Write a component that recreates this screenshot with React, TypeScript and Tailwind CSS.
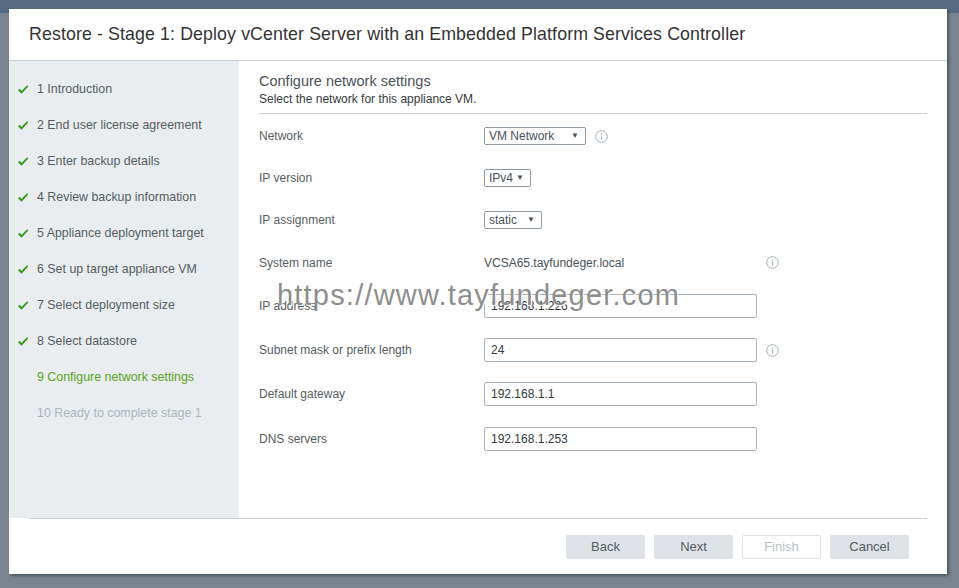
const steps = [
  { n: 1, label: 'Introduction', state: 'done' },
  { n: 2, label: 'End user license agreement', state: 'done' },
  { n: 3, label: 'Enter backup details', state: 'done' },
  { n: 4, label: 'Review backup information', state: 'done' },
  { n: 5, label: 'Appliance deployment target', state: 'done' },
  { n: 6, label: 'Set up target appliance VM', state: 'done' },
  { n: 7, label: 'Select deployment size', state: 'done' },
  { n: 8, label: 'Select datastore', state: 'done' },
  { n: 9, label: 'Configure network settings', state: 'active' },
  { n: 10, label: 'Ready to complete stage 1', state: 'todo' },
]

export default function App() {
  return (
    <div className="w-[959px] h-[588px] overflow-hidden bg-[linear-gradient(to_bottom,#566a82_13px,#7a8591_13px)] pt-[9px] pl-[9px] font-['Liberation_Sans',Arial,sans-serif]">
      <div className="w-[938px] h-[565px] bg-white flex flex-col shadow-[2px_2px_3px_rgba(40,50,60,0.55)]">
        {/* Header */}
        <div className="h-[52px] shrink-0 border-b border-[#c9d0d6] flex items-center pl-[20px] pb-[1px]">
          <h1 className="text-[17.8px] text-[#333] tracking-[0.1px]">
            Restore - Stage 1: Deploy vCenter Server with an Embedded Platform Services Controller
          </h1>
        </div>

        {/* Body */}
        <div className="flex h-[457px] shrink-0">
          <div className="w-[230px] shrink-0 bg-[#e9edf0] pt-[10px]">
            {steps.map((s) => (
              <div key={s.n} className="h-[36px] flex items-center pl-[8px] gap-[8px]">
                <div className="w-[12px] flex justify-center">
                  {s.state === 'done' && <CheckIcon />}
                </div>
                <span
                  className={
                    'text-[12.4px] ' +
                    (s.state === 'done'
                      ? 'text-[#565d63]'
                      : s.state === 'active'
                        ? 'text-[#5aa220]'
                        : 'text-[#aeb6bd]')
                  }
                >
                  {s.n} {s.label}
                </span>
              </div>
            ))}
          </div>

          <div className="flex-1 pl-[20px] pr-[20px] pt-[11px] relative">
            <div className="border-b border-[#c9d0d6] pb-[6px]">
              <h2 className="text-[14.5px] leading-[18px] text-[#4a5259]">Configure network settings</h2>
              <p className="text-[12px] leading-[16px] text-[#333a40] mt-[1px]">
                Select the network for this appliance VM.
              </p>
            </div>

            <div className="pt-[1px]">
              <Row h="h-[42px]" label="Network">
                <Select value="VM Network" width="w-[102px]" />
                <InfoIcon className="ml-[9px]" />
              </Row>
              <Row h="h-[42px]" label="IP version">
                <Select value="IPv4" width="w-[47px]" />
              </Row>
              <Row h="h-[42px]" label="IP assignment">
                <Select value="static" width="w-[58px]" />
              </Row>
              <Row h="h-[43px]" label="System name">
                <span className="w-[273px] text-[12px] text-[#4a5259]">VCSA65.tayfundeger.local</span>
                <InfoIcon className="ml-[9px]" />
              </Row>
              <Row h="h-[44px]" label="IP address">
                <TextInput value="192.168.1.226" />
              </Row>
              <Row h="h-[44px]" label="Subnet mask or prefix length">
                <TextInput value="24" />
                <InfoIcon className="ml-[9px]" />
              </Row>
              <Row h="h-[44px]" label="Default gateway">
                <TextInput value="192.168.1.1" />
              </Row>
              <Row h="h-[46px]" label="DNS servers">
                <TextInput value="192.168.1.253" />
              </Row>
            </div>

            {/* watermark */}
            <div className="absolute left-[38px] top-[219px] text-[29px] leading-[30px] tracking-[1.2px] text-[#7e7e7e]/90 [text-shadow:1px_1px_0_#ffffff] pointer-events-none select-none">
              https://www.tayfundeger.com
            </div>
          </div>
        </div>

        {/* Footer */}
        <div className="mx-[20px] border-t border-[#c9d0d6] flex justify-end pt-[16px] pr-[18px] gap-[9px]">
          <FooterButton label="Back" />
          <FooterButton label="Next" />
          <FooterButton label="Finish" disabled />
          <FooterButton label="Cancel" />
        </div>
      </div>
    </div>
  )
}

const Row = ({
  h,
  label,
  children,
}: {
  h: string
  label: string
  children: React.ReactNode
}) => (
  <div className={'flex items-center ' + h}>
    <span className="w-[225px] shrink-0 text-[12px] text-[#565d63]">{label}</span>
    <div className="flex items-center">{children}</div>
  </div>
)

const Select = ({ value, width }: { value: string; width: string }) => (
  <div
    className={
      'h-[18px] border border-[#8e99a2] rounded-[2px] flex items-center justify-between pl-[4px] pr-[6px] ' +
      width
    }
  >
    <span className="text-[12px] text-[#4a5259]">{value}</span>
    <span className="text-[8px] text-[#4a5259]">▼</span>
  </div>
)

const TextInput = ({ value }: { value: string }) => (
  <div className="w-[273px] h-[24px] border border-[#aab4bc] rounded-[2px] flex items-center pl-[6px]">
    <span className="text-[12px] text-[#333a40]">{value}</span>
  </div>
)

const FooterButton = ({ label, disabled }: { label: string; disabled?: boolean }) => (
  <button
    className={
      'w-[79px] h-[24px] rounded-[2px] text-[13px] ' +
      (disabled
        ? 'bg-white border border-[#dfe3e7] text-[#b8bfc5]'
        : 'bg-[#dfe3e7] text-[#565d63]')
    }
  >
    {label}
  </button>
)

const InfoIcon = ({ className }: { className?: string }) => (
  <svg width="13" height="13" viewBox="0 0 13 13" className={className}>
    <circle cx="6.5" cy="6.5" r="5.8" fill="none" stroke="#a3adb5" strokeWidth="1" />
    <circle cx="6.5" cy="3.8" r="0.8" fill="#a3adb5" />
    <rect x="6" y="5.4" width="1" height="4.2" fill="#a3adb5" />
  </svg>
)

const CheckIcon = () => (
  <svg width="13" height="11" viewBox="0 0 13 11">
    <path d="M1 6.2 L3 4.6 L5 6.8 L11 1 L12.3 2.3 L5 10 Z" fill="#3a9a22" />
  </svg>
)
